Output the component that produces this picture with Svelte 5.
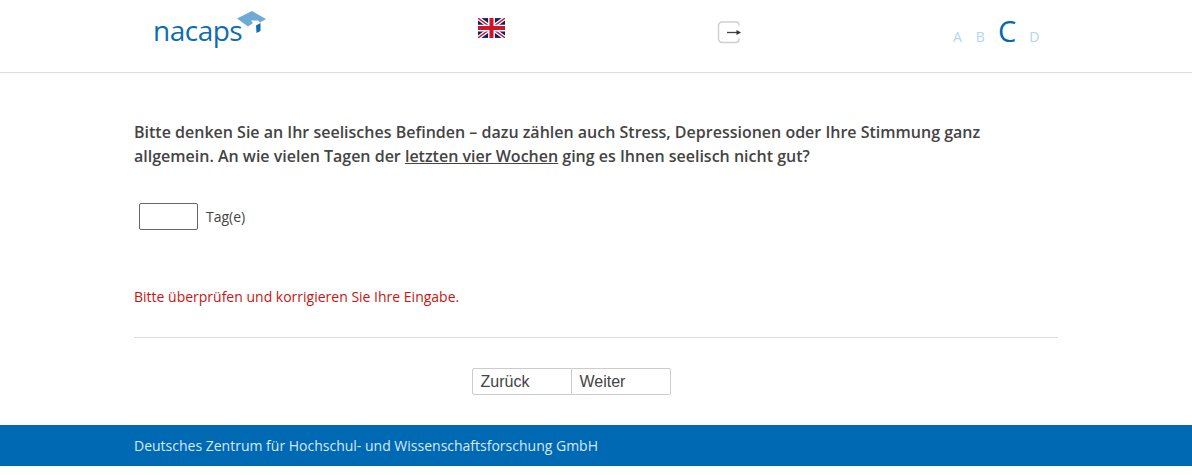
<script lang="ts">
  let days = $state('');
  const levels = ['A', 'B', 'C', 'D'];
  const activeLevel = 'C';
</script>

<div class="page">
  <header class="top">
    <div class="top-inner">
      <div class="logo">
        <span class="logo-text">nacaps</span>
        <svg class="logo-mark" width="34" height="30" viewBox="0 0 34 30">
          <path d="M2 8.5 L17 1 L31 9 L25 12.5 L23 10.5 L16 10.5 L18 13 L13 16.5 Z" fill="#6fa9d8" />
          <path d="M21 15.5 L25.5 13 V21 L21.5 23 Z" fill="#0f6cb0" />
        </svg>
      </div>
      <div class="flag-cell">
        <svg width="27" height="20" viewBox="0 0 60 44">
          <rect width="60" height="44" fill="#0b1f66" />
          <path d="M0 0 L60 44 M60 0 L0 44" stroke="#fff" stroke-width="9" />
          <path d="M0 0 L60 44 M60 0 L0 44" stroke="#cf142b" stroke-width="3" />
          <path d="M30 0 V44 M0 22 H60" stroke="#fff" stroke-width="15" />
          <path d="M30 0 V44 M0 22 H60" stroke="#cf142b" stroke-width="9" />
        </svg>
      </div>
      <div class="exit-cell">
        <svg width="26" height="24" viewBox="0 0 26 24">
          <path d="M22 4.5 V3.5 A3 3 0 0 0 19 1 H5 A3.5 3.5 0 0 0 1.5 4.5 V18 A3.5 3.5 0 0 0 5 21.5 H19 A3 3 0 0 0 22 18.5 V17" fill="none" stroke="#cfcfcf" stroke-width="1.4" />
          <path d="M10 11.5 H20" stroke="#444" stroke-width="1.3" />
          <path d="M19.5 9 L24 11.5 L19.5 14 Z" fill="#333" />
        </svg>
      </div>
      <div class="levels">
        {#each levels as level}
          <span class="level" class:active={level === activeLevel}>{level}</span>
        {/each}
      </div>
    </div>
  </header>

  <main class="content">
    <p class="question">
      Bitte denken Sie an Ihr seelisches Befinden – dazu zählen auch Stress, Depressionen oder Ihre Stimmung ganz
      allgemein. An wie vielen Tagen der <u>letzten vier Wochen</u> ging es Ihnen seelisch nicht gut?
    </p>
    <div class="answer">
      <input type="text" bind:value={days} />
      <span>Tag(e)</span>
    </div>
    <p class="error">Bitte überprüfen und korrigieren Sie Ihre Eingabe.</p>
    <hr />
    <div class="nav">
      <button>Zurück</button>
      <button>Weiter</button>
    </div>
  </main>

  <footer class="bottom">
    <span>Deutsches Zentrum für Hochschul- und Wissenschaftsforschung GmbH</span>
  </footer>
</div>

<style>
  :global(body) {
    background: #fff;
  }

  .page {
    font-family: "Open Sans", sans-serif;
    color: #444;
  }

  .top {
    height: 72px;
    border-bottom: 1px solid #ddd;
  }

  .top-inner {
    display: grid;
    grid-template-columns: 344px 239px 221px 1fr;
    padding-left: 134px;
    height: 100%;
  }

  .logo {
    position: relative;
    padding: 13px 0 0 19px;
  }

  .logo-text {
    font-size: 28px;
    line-height: 34px;
    color: #0f6cb0;
    letter-spacing: -0.5px;
  }

  .logo-mark {
    position: absolute;
    left: 101px;
    top: 10px;
  }

  .flag-cell {
    padding-top: 18px;
  }

  .exit-cell {
    padding-top: 21px;
  }

  .levels {
    display: flex;
    align-items: baseline;
    gap: 14px;
    padding: 11px 0 0 15px;
    height: fit-content;
  }

  .level {
    font-size: 14px;
    color: #b5d5ee;
  }

  .level.active {
    font-size: 29px;
    color: #0069b4;
    margin: 0 -1px 0 -1px;
  }

  .content {
    padding: 47px 134px 0;
  }

  .question {
    margin: 0;
    font-size: 16px;
    font-weight: 600;
    line-height: 24px;
    color: #444;
    width: 880px;
  }

  .answer {
    display: flex;
    align-items: center;
    gap: 8px;
    margin: 35px 0 0 5px;
    font-size: 14px;
  }

  .answer input {
    width: 59px;
    height: 27px;
    box-sizing: border-box;
    border: 1px solid #666;
    border-radius: 2px;
    padding: 0 4px;
    background: #fff;
  }

  .error {
    margin: 57px 0 0;
    font-size: 14px;
    line-height: 20px;
    color: #c81414;
  }

  hr {
    margin: 30px 0 0;
    border: 0;
    border-top: 1px solid #ddd;
  }

  .nav {
    display: flex;
    justify-content: center;
    margin-top: 30px;
    padding-right: 50px;
  }

  .nav button {
    width: 100px;
    height: 27px;
    box-sizing: border-box;
    padding: 0 0 0 8px;
    text-align: left;
    font-family: "Liberation Sans", Arial, sans-serif;
    font-size: 16px;
    color: #444;
    background: #fff;
    border: 1px solid #ccc;
    border-radius: 2px 0 0 2px;
  }

  .nav button + button {
    width: 99px;
    border-left: 0;
    border-radius: 0 2px 2px 0;
  }

  .bottom {
    margin-top: 30px;
    height: 41px;
    background: #0069b4;
    color: #d9e8f4;
    font-size: 14px;
    line-height: 41px;
    padding-left: 134px;
  }
</style>
